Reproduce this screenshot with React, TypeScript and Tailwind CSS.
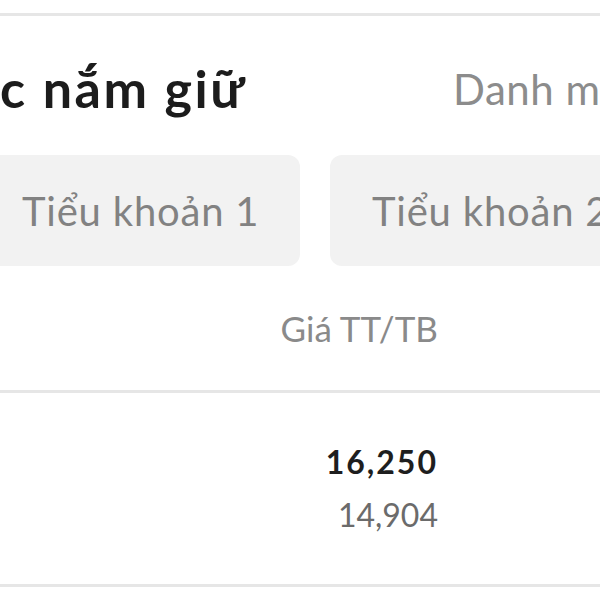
import React from "react";

export default function App() {
  return (
    <div
      className="w-[600px] h-[600px] bg-white overflow-hidden flex flex-col"
      style={{ fontFamily: "Lato, 'Noto Sans', sans-serif" }}
    >
      <div className="h-[13px] shrink-0" />
      <div className="h-[3px] bg-[#e6e6e6] shrink-0" />

      {/* title row */}
      <div className="flex items-end h-[104px] shrink-0 whitespace-nowrap overflow-hidden pb-[6px]">
        <div className="w-[453px] shrink-0 text-[52px] leading-none font-bold text-[#1c1c1c] tracking-[2.5px]">
          c nắm giữ
        </div>
        <div className="text-[42px] leading-none text-[#8c8c8c] pb-[4px] tracking-[0.5px]">Danh mục</div>
      </div>

      {/* sub-account tabs */}
      <div className="flex gap-[30px] mt-[35px] h-[111px] shrink-0 whitespace-nowrap overflow-hidden">
        <div className="ml-[-20px] w-[320px] shrink-0 rounded-[12px] bg-[#f2f2f2] flex items-center pl-[42px]">
          <span className="text-[40px] tracking-[0.8px] text-[#828282]">Tiểu khoản 1</span>
        </div>
        <div className="w-[300px] shrink-0 rounded-[12px] bg-[#f2f2f2] flex items-center pl-[42px]">
          <span className="text-[40px] tracking-[0.8px] text-[#828282]">Tiểu khoản 2</span>
        </div>
      </div>

      {/* table header */}
      <div className="h-[124px] shrink-0 flex items-center">
        <div className="w-[438px] text-right text-[35px] text-[#8a8a8a]">Giá TT/TB</div>
      </div>
      <div className="h-[3px] bg-[#e6e6e6] shrink-0" />

      {/* row */}
      <div className="h-[191px] shrink-0 flex flex-col pt-[49px]">
        <div className="w-[438px] text-right text-[32px] leading-[40px] font-bold text-[#1e1e1e] tracking-[2px]">
          16,250
        </div>
        <div className="w-[438px] text-right text-[32px] leading-[40px] mt-[13px] text-[#6b6b6b]">
          14,904
        </div>
      </div>
      <div className="h-[3px] bg-[#e6e6e6] shrink-0" />
    </div>
  );
}
